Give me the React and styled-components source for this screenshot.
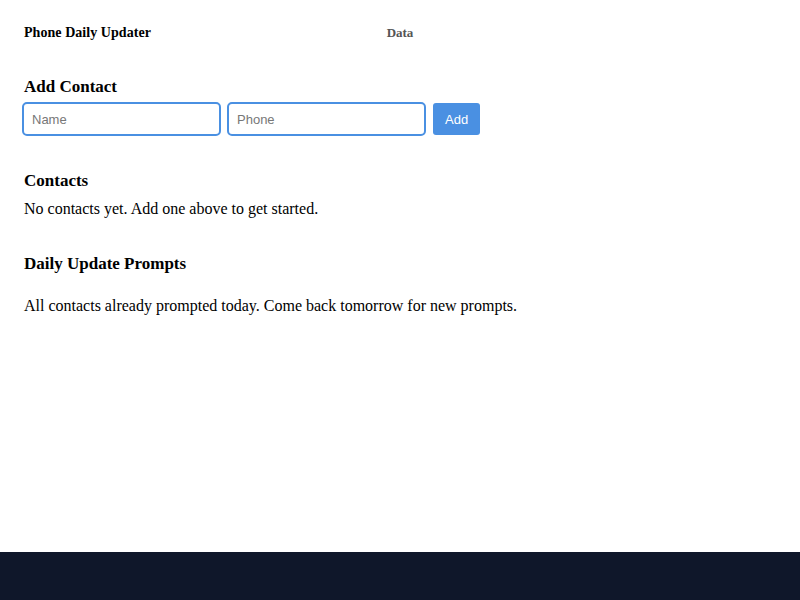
import React from "react";
import styled, { createGlobalStyle } from "styled-components";

const Global = createGlobalStyle`
  html, body { margin: 0; padding: 0; background: #fff; }
  body { font-family: "Liberation Serif", "Times New Roman", serif; color: #000; }
`;

const Page = styled.div`
  min-height: 100vh;
  display: flex;
  flex-direction: column;
`;

const Header = styled.header`
  height: 63px;
  padding: 1px 24px 0;
  display: grid;
  grid-template-columns: 1fr auto 1fr;
  align-items: center;
`;

const Title = styled.div`
  font-size: 14px;
  font-weight: bold;
  letter-spacing: 0.05px;
`;

const NavLink = styled.span`
  font-size: 13px;
  font-weight: bold;
  color: #555;
`;

const Main = styled.main`
  flex: 1;
  padding: 0 24px;
`;

const Section = styled.section`
  margin-top: ${(p) => p.$top}px;
`;

const Heading = styled.h2`
  margin: 0;
  font-size: 17px;
  line-height: 20px;
  font-weight: bold;
`;

const Form = styled.div`
  display: flex;
  align-items: center;
  gap: 6px;
  margin-top: 5px;
  margin-left: -2px;
`;

const Input = styled.input`
  box-sizing: border-box;
  width: 199px;
  height: 34px;
  border: 2px solid #4a90e2;
  border-radius: 5px;
  padding: 0 8px;
  font-family: "Liberation Sans", Arial, sans-serif;
  font-size: 13px;
  outline: none;
  &::placeholder { color: #777; }
`;

const Button = styled.button`
  height: 32px;
  padding: 0 12px;
  margin-left: 1px;
  border: none;
  border-radius: 3px;
  background: #4a90e2;
  color: #fff;
  font-family: "Liberation Sans", Arial, sans-serif;
  font-size: 13px;
`;

const Text = styled.p`
  margin: ${(p) => p.$top || 0}px 0 0;
  font-size: 16px;
  line-height: 20px;
`;

const Footer = styled.footer`
  height: 48px;
  background: #0f172a;
`;

export default function App() {
  return (
    <>
      <Global />
      <Page>
        <Header>
          <Title>Phone Daily Updater</Title>
          <NavLink>Data</NavLink>
          <div />
        </Header>
        <Main>
          <Section $top={13}>
            <Heading>Add Contact</Heading>
            <Form>
              <Input placeholder="Name" />
              <Input placeholder="Phone" />
              <Button>Add</Button>
            </Form>
          </Section>
          <Section $top={35}>
            <Heading>Contacts</Heading>
            <Text $top={8}>No contacts yet. Add one above to get started.</Text>
          </Section>
          <Section $top={35}>
            <Heading>Daily Update Prompts</Heading>
            <Text $top={22}>All contacts already prompted today. Come back tomorrow for new prompts.</Text>
          </Section>
        </Main>
        <Footer />
      </Page>
    </>
  );
}
